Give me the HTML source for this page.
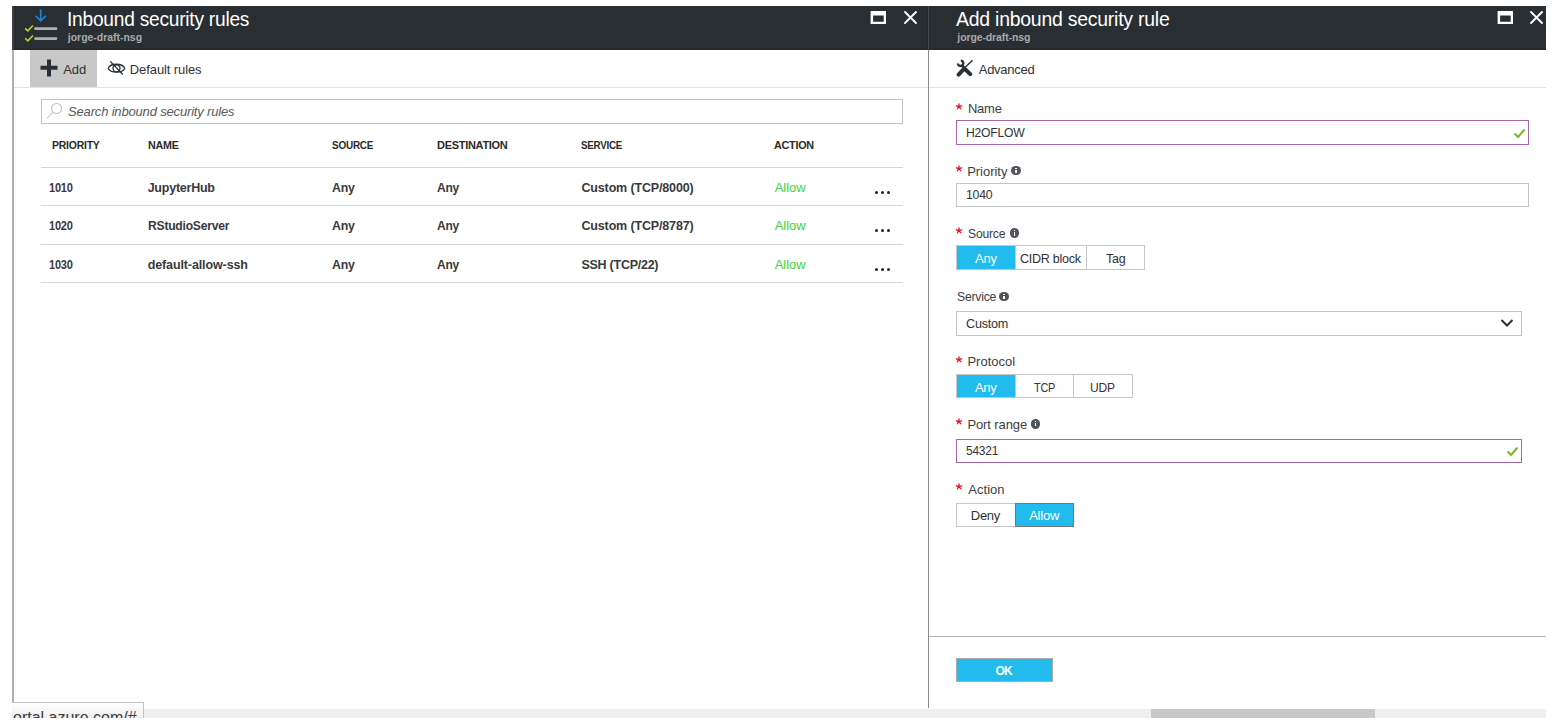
<!DOCTYPE html>
<html><head><meta charset="utf-8">
<style>
*{margin:0;padding:0;box-sizing:border-box}
html,body{width:1558px;height:728px;overflow:hidden;background:#fff;font-family:"Liberation Sans",sans-serif;color:#323232}
.a{position:absolute}
.t{position:absolute;white-space:nowrap;line-height:1}
.hdr{background:#292e32;border-bottom:2px solid #25292c}
.sep{background:#e3e3e3;height:1px}
.rl{background:#d6d6d6;height:1px}
.inp{position:absolute;border:1px solid #c4c4c4;background:#fff}
.pur{border-color:#a866ad}
.seg{position:absolute;border:1px solid #c6c6c6;background:#fff}
.on{background:#22bbee}
.info{position:absolute;width:9.6px;height:9.6px;border-radius:50%;background:#50555b}
.info:before{content:"";position:absolute;left:4px;top:3.8px;width:1.6px;height:3.6px;background:#fff}
.info:after{content:"";position:absolute;left:4px;top:1.8px;width:1.6px;height:1.3px;background:#fff}
.dot{position:absolute;width:3px;height:3px;border-radius:50%;background:#222}
</style></head><body>

<!-- LEFT PANEL -->
<div class="a hdr" style="left:12px;top:6px;width:916px;height:44px"></div>
<div class="a" style="left:12px;top:6px;width:2px;height:44px;background:#3a3e44"></div>
<div class="a" style="left:12px;top:50px;width:2px;height:652px;background:#b0b0b0"></div>
<div class="a" style="left:928px;top:50px;width:1px;height:658px;background:#8c8c8c"></div>

<svg class="a" style="left:20px;top:6px" width="44" height="44" viewBox="0 0 44 44">
  <path d="M20.7 3.6 V14.9 M15.6 9.8 L20.7 14.9 L25.8 9.8" stroke="#1a82d4" stroke-width="1.7" fill="none"/>
  <path d="M5.2 22.3 L7.8 24.8 L13 19.5" stroke="#b6d234" stroke-width="1.6" fill="none"/>
  <path d="M5.2 32.2 L7.8 34.8 L13 29.5" stroke="#b6d234" stroke-width="1.6" fill="none"/>
  <path d="M15.5 22.7 H36 M15.5 32.6 H36" stroke="#b0b0b0" stroke-width="2.8" stroke-linecap="round" fill="none"/>
</svg>
<svg class="a" style="left:870px;top:11px" width="16" height="14" viewBox="0 0 16 14"><path fill-rule="evenodd" fill="#fff" d="M0.6 0 H16 V13.1 H0.6 Z M3.1 4.6 V10.8 H13.7 V4.6 Z"/></svg>
<svg class="a" style="left:903px;top:10px" width="16" height="16" viewBox="0 0 16 16"><path d="M2 2 L13 13 M13 2 L2 13" stroke="#fff" stroke-width="1.9" stroke-linecap="round"/></svg>

<div class="a" style="left:30px;top:50px;width:67px;height:37px;background:#c8c8c8"></div>
<svg class="a" style="left:40px;top:59px" width="18" height="18" viewBox="0 0 18 18"><path d="M9 0.5 V17.5 M0.5 8.8 H17.5" stroke="#2a2f36" stroke-width="4"/></svg>
<svg class="a" style="left:107px;top:60px" width="19" height="16" viewBox="0 0 19 16">
  <path d="M1.2 8.2 C3.5 2.9, 15.4 2.9, 17.7 8.2 C15.4 13.5, 3.5 13.5, 1.2 8.2 Z" stroke="#2a2f36" stroke-width="1.3" fill="none"/>
  <circle cx="9.5" cy="8.3" r="3.5" stroke="#2a2f36" stroke-width="1.3" fill="none"/>
  <path d="M3.3 1.4 L15.8 14.5" stroke="#2a2f36" stroke-width="1.3"/>
</svg>
<div class="a sep" style="left:14px;top:87px;width:914px"></div>

<div class="inp" style="left:41px;top:99px;width:862px;height:25px"></div>
<svg class="a" style="left:46px;top:102px" width="18" height="18" viewBox="0 0 18 18">
  <circle cx="10.5" cy="6.5" r="5" stroke="#c2c2c2" stroke-width="1.1" fill="none"/>
  <path d="M7 10 L1 16.5" stroke="#c2c2c2" stroke-width="1.1"/>
</svg>

<div class="a rl" style="left:41px;top:167px;width:862px"></div>
<div class="a rl" style="left:41px;top:205px;width:862px"></div>
<div class="a rl" style="left:41px;top:244px;width:862px"></div>
<div class="a rl" style="left:41px;top:282px;width:862px"></div>
<div class="dot" style="left:875px;top:190.5px"></div><div class="dot" style="left:881px;top:190.5px"></div><div class="dot" style="left:887px;top:190.5px"></div>
<div class="dot" style="left:875px;top:229px"></div><div class="dot" style="left:881px;top:229px"></div><div class="dot" style="left:887px;top:229px"></div>
<div class="dot" style="left:875px;top:267.5px"></div><div class="dot" style="left:881px;top:267.5px"></div><div class="dot" style="left:887px;top:267.5px"></div>

<!-- RIGHT PANEL -->
<div class="a hdr" style="left:929px;top:6px;width:617px;height:44px"></div>
<div class="a" style="left:927px;top:6px;width:1px;height:44px;background:#24282b"></div><div class="a" style="left:928px;top:6px;width:1px;height:44px;background:#474b50"></div>
<svg class="a" style="left:1497px;top:11px" width="16" height="14" viewBox="0 0 16 14"><path fill-rule="evenodd" fill="#fff" d="M0.6 0 H16 V13.1 H0.6 Z M3.1 4.6 V10.8 H13.7 V4.6 Z"/></svg>
<svg class="a" style="left:1529px;top:10px" width="16" height="16" viewBox="0 0 16 16"><path d="M2 2 L13 13 M13 2 L2 13" stroke="#fff" stroke-width="1.9" stroke-linecap="round"/></svg>

<svg class="a" style="left:956px;top:59px" width="18" height="18" viewBox="0 0 18 18">
  <path d="M16.6 1.2 L8.6 8.8" stroke="#2a2f36" stroke-width="1.4" fill="none"/>
  <path d="M8.2 9.6 L2.6 15.6" stroke="#2a2f36" stroke-width="4" stroke-linecap="round" fill="none"/>
  <path d="M9.6 10.6 L14.2 15.2" stroke="#2a2f36" stroke-width="4" stroke-linecap="round" fill="none"/>
  <path d="M6 6.4 L10 10.6" stroke="#2a2f36" stroke-width="2.4" fill="none"/>
  <path d="M4.8 1.6 A2.7 2.7 0 1 1 1.9 4.5" stroke="#2a2f36" stroke-width="2.3" fill="none"/>
</svg>
<div class="a sep" style="left:929px;top:87px;width:617px"></div>

<svg class="a" style="left:955.1px;top:102.6px" width="8" height="8" viewBox="0 0 8 8"><path d="M4 1 V3.6 L6.6 2.8 M4 3.6 L1.4 2.8 M4 3.6 L5.6 5.7 M4 3.6 L2.4 5.7" stroke="#e81123" stroke-width="1.35" stroke-linecap="round" fill="none"/></svg>
<div class="inp pur" style="left:956px;top:120px;width:573px;height:25px"></div>
<svg class="a" style="left:1513px;top:128px" width="13" height="11" viewBox="0 0 13 11"><path d="M1.5 5.5 L5 9 L11.5 1.5" stroke="#7cb82f" stroke-width="2" fill="none"/></svg>

<svg class="a" style="left:955px;top:165.3px" width="8" height="8" viewBox="0 0 8 8"><path d="M4 1 V3.6 L6.6 2.8 M4 3.6 L1.4 2.8 M4 3.6 L5.6 5.7 M4 3.6 L2.4 5.7" stroke="#e81123" stroke-width="1.35" stroke-linecap="round" fill="none"/></svg>
<div class="info" style="left:1011.4px;top:165.9px"></div>
<div class="inp" style="left:956px;top:183px;width:573px;height:24px"></div>

<svg class="a" style="left:955px;top:227.3px" width="8" height="8" viewBox="0 0 8 8"><path d="M4 1 V3.6 L6.6 2.8 M4 3.6 L1.4 2.8 M4 3.6 L5.6 5.7 M4 3.6 L2.4 5.7" stroke="#e81123" stroke-width="1.35" stroke-linecap="round" fill="none"/></svg>
<div class="info" style="left:1009.8px;top:228.3px"></div>
<div class="seg on" style="left:956px;top:245px;width:60px;height:25px"></div>
<div class="seg" style="left:1015px;top:245px;width:72px;height:25px"></div>
<div class="seg" style="left:1086px;top:245px;width:59px;height:25px"></div>

<div class="info" style="left:999.2px;top:291.8px"></div>
<div class="inp" style="left:956px;top:311px;width:566px;height:25px"></div>
<svg class="a" style="left:1500px;top:318px" width="14" height="10" viewBox="0 0 14 10"><path d="M1.5 2 L7 7.5 L12.5 2" stroke="#2a2f36" stroke-width="2" fill="none"/></svg>

<svg class="a" style="left:955px;top:355.7px" width="8" height="8" viewBox="0 0 8 8"><path d="M4 1 V3.6 L6.6 2.8 M4 3.6 L1.4 2.8 M4 3.6 L5.6 5.7 M4 3.6 L2.4 5.7" stroke="#e81123" stroke-width="1.35" stroke-linecap="round" fill="none"/></svg>
<div class="seg on" style="left:956px;top:374px;width:60px;height:24px"></div>
<div class="seg" style="left:1015px;top:374px;width:59px;height:24px"></div>
<div class="seg" style="left:1073px;top:374px;width:60px;height:24px"></div>

<svg class="a" style="left:955px;top:417.8px" width="8" height="8" viewBox="0 0 8 8"><path d="M4 1 V3.6 L6.6 2.8 M4 3.6 L1.4 2.8 M4 3.6 L5.6 5.7 M4 3.6 L2.4 5.7" stroke="#e81123" stroke-width="1.35" stroke-linecap="round" fill="none"/></svg>
<div class="info" style="left:1030.8px;top:419.1px"></div>
<div class="inp pur" style="left:956px;top:439px;width:566px;height:24px"></div>
<svg class="a" style="left:1506px;top:446px" width="13" height="11" viewBox="0 0 13 11"><path d="M1.5 5.5 L5 9 L11.5 1.5" stroke="#7cb82f" stroke-width="2" fill="none"/></svg>

<svg class="a" style="left:955px;top:483.3px" width="8" height="8" viewBox="0 0 8 8"><path d="M4 1 V3.6 L6.6 2.8 M4 3.6 L1.4 2.8 M4 3.6 L5.6 5.7 M4 3.6 L2.4 5.7" stroke="#e81123" stroke-width="1.35" stroke-linecap="round" fill="none"/></svg>
<div class="seg" style="left:956px;top:503px;width:60px;height:24px"></div>
<div class="seg on" style="left:1015px;top:503px;width:59px;height:24px;border-color:#777"></div>

<div class="a" style="left:929px;top:636px;width:617px;height:1px;background:#b4b4b4"></div>
<div class="a" style="left:956px;top:658px;width:97px;height:24px;background:#22bbee;border:1px solid #aaa"></div>

<div class="t" id="t1" style="left:66.94px;top:8.97px;font-size:20px;color:#fff;letter-spacing:-0.250px;transform:scaleX(0.9579);transform-origin:0 0">Inbound security rules</div>
<div class="t" id="st1" style="left:67.80px;top:32.01px;font-size:10.5px;color:#a9a9a9;font-weight:bold;letter-spacing:-0.029px">jorge-draft-nsg</div>
<div class="t" id="t2" style="left:956.10px;top:8.97px;font-size:20px;color:#fff;letter-spacing:-0.250px;transform:scaleX(0.9727);transform-origin:0 0">Add inbound security rule</div>
<div class="t" id="st2" style="left:957.34px;top:32.01px;font-size:10.5px;color:#a9a9a9;font-weight:bold;letter-spacing:-0.114px">jorge-draft-nsg</div>
<div class="t" id="add" style="left:63.36px;top:63.00px;font-size:13px;color:#333;letter-spacing:-0.160px">Add</div>
<div class="t" id="defr" style="left:129.84px;top:63.00px;font-size:13px;color:#333;letter-spacing:-0.100px">Default rules</div>
<div class="t" id="srch" style="left:68.00px;top:105.20px;font-size:13px;color:#595959;font-style:italic;letter-spacing:-0.166px">Search inbound security rules</div>
<div class="t" id="h_pri" style="left:51.64px;top:139.69px;font-size:11px;color:#2b2b2b;font-weight:bold;letter-spacing:-0.250px;transform:scaleX(0.9522);transform-origin:0 0">PRIORITY</div>
<div class="t" id="h_nam" style="left:147.64px;top:139.69px;font-size:11px;color:#2b2b2b;font-weight:bold;letter-spacing:-0.250px;transform:scaleX(0.9753);transform-origin:0 0">NAME</div>
<div class="t" id="h_src" style="left:332.36px;top:139.69px;font-size:11px;color:#2b2b2b;font-weight:bold;letter-spacing:-0.250px;transform:scaleX(0.9043);transform-origin:0 0">SOURCE</div>
<div class="t" id="h_dst" style="left:437.10px;top:139.69px;font-size:11px;color:#2b2b2b;font-weight:bold;letter-spacing:-0.304px">DESTINATION</div>
<div class="t" id="h_svc" style="left:581.46px;top:139.69px;font-size:11px;color:#2b2b2b;font-weight:bold;letter-spacing:-0.250px;transform:scaleX(0.8877);transform-origin:0 0">SERVICE</div>
<div class="t" id="h_act" style="left:774.28px;top:139.69px;font-size:11px;color:#2b2b2b;font-weight:bold;letter-spacing:-0.250px;transform:scaleX(0.9805);transform-origin:0 0">ACTION</div>
<div class="t" id="r0p" style="left:48.54px;top:182.02px;font-size:12.5px;color:#3a3a3a;font-weight:bold;letter-spacing:-0.250px;transform:scaleX(0.8820);transform-origin:0 0">1010</div>
<div class="t" id="r0n" style="left:147.64px;top:182.02px;font-size:12.5px;color:#3a3a3a;font-weight:bold;letter-spacing:-0.231px">JupyterHub</div>
<div class="t" id="r0s" style="left:332.36px;top:182.02px;font-size:12.5px;color:#3a3a3a;font-weight:bold;letter-spacing:-0.250px;transform:scaleX(0.9851);transform-origin:0 0">Any</div>
<div class="t" id="r0d" style="left:437.10px;top:182.02px;font-size:12.5px;color:#3a3a3a;font-weight:bold;letter-spacing:-0.250px;transform:scaleX(0.9607);transform-origin:0 0">Any</div>
<div class="t" id="r0v" style="left:581.46px;top:182.02px;font-size:12.5px;color:#3a3a3a;font-weight:bold;letter-spacing:-0.150px">Custom (TCP/8000)</div>
<div class="t" id="r0a" style="left:774.64px;top:180.70px;font-size:13px;color:#3fd23a">Allow</div>
<div class="t" id="r1p" style="left:48.54px;top:219.62px;font-size:12.5px;color:#3a3a3a;font-weight:bold;letter-spacing:-0.250px;transform:scaleX(0.8820);transform-origin:0 0">1020</div>
<div class="t" id="r1n" style="left:147.64px;top:219.62px;font-size:12.5px;color:#3a3a3a;font-weight:bold;letter-spacing:-0.250px;transform:scaleX(0.9715);transform-origin:0 0">RStudioServer</div>
<div class="t" id="r1s" style="left:332.36px;top:219.62px;font-size:12.5px;color:#3a3a3a;font-weight:bold;letter-spacing:-0.250px;transform:scaleX(0.9851);transform-origin:0 0">Any</div>
<div class="t" id="r1d" style="left:437.10px;top:219.62px;font-size:12.5px;color:#3a3a3a;font-weight:bold;letter-spacing:-0.250px;transform:scaleX(0.9607);transform-origin:0 0">Any</div>
<div class="t" id="r1v" style="left:581.46px;top:219.62px;font-size:12.5px;color:#3a3a3a;font-weight:bold;letter-spacing:-0.150px">Custom (TCP/8787)</div>
<div class="t" id="r1a" style="left:774.64px;top:219.20px;font-size:13px;color:#3fd23a">Allow</div>
<div class="t" id="r2p" style="left:48.54px;top:259.12px;font-size:12.5px;color:#3a3a3a;font-weight:bold;letter-spacing:-0.250px;transform:scaleX(0.8820);transform-origin:0 0">1030</div>
<div class="t" id="r2n" style="left:147.64px;top:259.12px;font-size:12.5px;color:#3a3a3a;font-weight:bold;letter-spacing:-0.110px">default-allow-ssh</div>
<div class="t" id="r2s" style="left:332.36px;top:259.12px;font-size:12.5px;color:#3a3a3a;font-weight:bold;letter-spacing:-0.250px;transform:scaleX(0.9851);transform-origin:0 0">Any</div>
<div class="t" id="r2d" style="left:437.10px;top:259.12px;font-size:12.5px;color:#3a3a3a;font-weight:bold;letter-spacing:-0.250px;transform:scaleX(0.9607);transform-origin:0 0">Any</div>
<div class="t" id="r2v" style="left:581.46px;top:259.12px;font-size:12.5px;color:#3a3a3a;font-weight:bold;letter-spacing:-0.255px">SSH (TCP/22)</div>
<div class="t" id="r2a" style="left:774.64px;top:257.80px;font-size:13px;color:#3fd23a">Allow</div>
<div class="t" id="adv" style="left:978.72px;top:62.90px;font-size:13px;color:#333;letter-spacing:-0.251px">Advanced</div>
<div class="t" id="l_name" style="left:967.92px;top:102.20px;font-size:13px;color:#404040;letter-spacing:-0.213px">Name</div>
<div class="t" id="v_name" style="left:966.18px;top:126.10px;font-size:13px;color:#333;letter-spacing:-0.250px;transform:scaleX(0.9367);transform-origin:0 0">H2OFLOW</div>
<div class="t" id="l_pri" style="left:967.20px;top:164.80px;font-size:13px;color:#404040;letter-spacing:-0.034px">Priority</div>
<div class="t" id="v_pri" style="left:966.10px;top:187.80px;font-size:13px;color:#333;letter-spacing:-0.250px;transform:scaleX(0.9435);transform-origin:0 0">1040</div>
<div class="t" id="l_src" style="left:968.00px;top:226.60px;font-size:13px;color:#404040;letter-spacing:-0.250px;transform:scaleX(0.9400);transform-origin:0 0">Source</div>
<div class="t" id="s_any" style="left:974.92px;top:252.30px;font-size:13px;color:#fff;letter-spacing:-0.200px">Any</div>
<div class="t" id="s_cidr" style="left:1020.00px;top:252.30px;font-size:13px;color:#333;letter-spacing:-0.250px;transform:scaleX(0.9626);transform-origin:0 0">CIDR block</div>
<div class="t" id="s_tag" style="left:1106.00px;top:252.30px;font-size:13px;color:#333;letter-spacing:-0.250px;transform:scaleX(0.9612);transform-origin:0 0">Tag</div>
<div class="t" id="l_svc" style="left:956.54px;top:289.90px;font-size:13px;color:#404040;letter-spacing:-0.250px;transform:scaleX(0.9418);transform-origin:0 0">Service</div>
<div class="t" id="v_svc" style="left:965.82px;top:316.80px;font-size:13px;color:#333;letter-spacing:-0.250px;transform:scaleX(0.9725);transform-origin:0 0">Custom</div>
<div class="t" id="l_pro" style="left:967.38px;top:355.10px;font-size:13px;color:#404040;letter-spacing:0.023px">Protocol</div>
<div class="t" id="p_any" style="left:974.92px;top:380.50px;font-size:13px;color:#fff;letter-spacing:-0.240px">Any</div>
<div class="t" id="p_tcp" style="left:1033.64px;top:380.50px;font-size:13px;color:#333;letter-spacing:-0.250px;transform:scaleX(0.8363);transform-origin:0 0">TCP</div>
<div class="t" id="p_udp" style="left:1090.10px;top:380.50px;font-size:13px;color:#333;letter-spacing:-0.250px;transform:scaleX(0.9254);transform-origin:0 0">UDP</div>
<div class="t" id="l_port" style="left:967.38px;top:417.50px;font-size:13px;color:#404040;letter-spacing:-0.098px">Port range</div>
<div class="t" id="v_port" style="left:966.00px;top:444.30px;font-size:13px;color:#333;letter-spacing:-0.250px;transform:scaleX(0.9202);transform-origin:0 0">54321</div>
<div class="t" id="l_act" style="left:968.36px;top:482.80px;font-size:13px;color:#404040">Action</div>
<div class="t" id="a_deny" style="left:970.84px;top:509.00px;font-size:13px;color:#333;letter-spacing:-0.320px">Deny</div>
<div class="t" id="a_allow" style="left:1029.18px;top:509.00px;font-size:13px;color:#fff;letter-spacing:-0.240px">Allow</div>
<div class="t" id="ok" style="left:995.46px;top:664.74px;font-size:12px;color:#fff;font-weight:bold;letter-spacing:-0.720px">OK</div>

<div class="a" style="left:12px;top:709px;width:1534px;height:9px;background:#efefef"></div>
<div class="a" style="left:1151px;top:709px;width:224px;height:9px;background:#c8c8c8"></div>
<div class="a" style="left:12px;top:702px;width:132px;height:16px;border-top:1px solid #c4c4c4;border-right:1px solid #c4c4c4;background:linear-gradient(#fff,#eee);overflow:hidden">
  <div style="position:absolute;white-space:nowrap;line-height:1;left:1px;top:7px;font-size:16px;color:#3c3c3c">ortal.azure.com/#</div>
</div>
</body></html>
